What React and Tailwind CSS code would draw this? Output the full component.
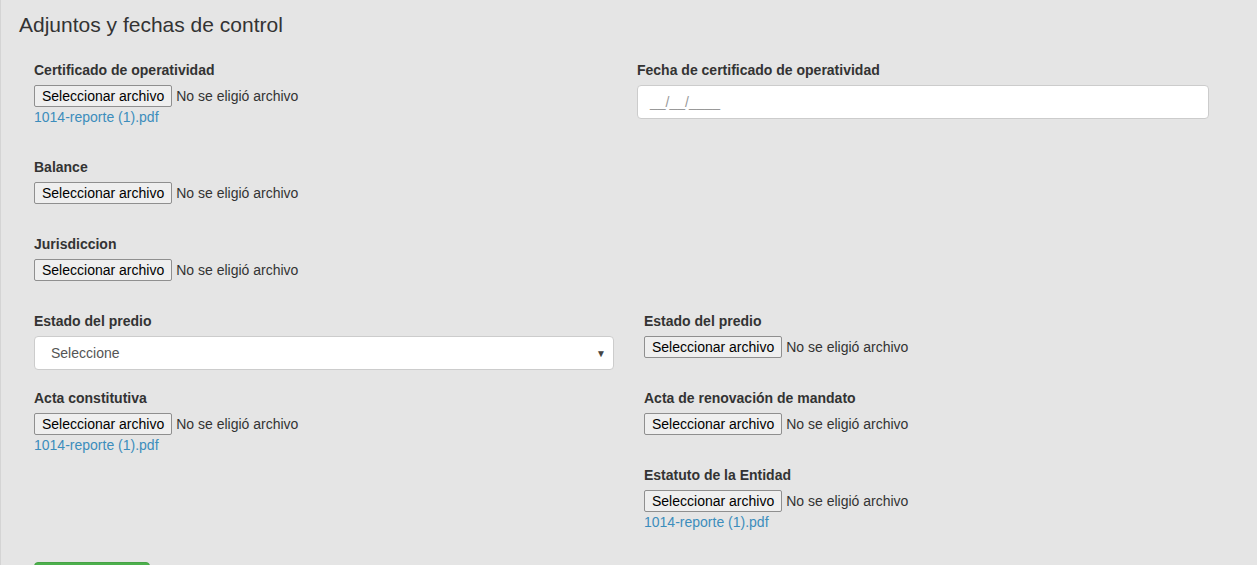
import React from 'react';

const FileBox = () => (
  <div className="flex items-center h-[22px]">
    <span className="h-[22px] px-[7px] border border-[#8f8f8f] rounded-[2px] bg-[#efefef] text-[14px] leading-[20px] text-black">
      Seleccionar archivo
    </span>
    <span className="ml-[4px] text-[14px] text-[#333]">No se eligió archivo</span>
  </div>
);

const Label = ({ children }) => (
  <div className="h-[20px] leading-[20px] mb-[5px] text-[14px] font-bold text-[#333]">{children}</div>
);

const FileLink = () => (
  <a href="#" className="block h-[20px] leading-[20px] text-[14px] text-[#3c8dbc]">
    1014-reporte (1).pdf
  </a>
);

const FileField = ({ label, link }) => (
  <div>
    <Label>{label}</Label>
    <FileBox />
    {link && <FileLink />}
  </div>
);

const App = () => {
  return (
    <div className="min-h-screen bg-[#e5e5e5] border-l border-[#d4d4d4] font-['Liberation_Sans',Arial,sans-serif] overflow-hidden">
      <h3 className="pl-[18px] pt-[13px] text-[21px] leading-[23px] text-[#333]">Adjuntos y fechas de control</h3>

      <div className="pl-[33px] pt-[24px]">
        {/* fila 1 */}
        <div className="flex h-[97px]">
          <div className="w-[603px]">
            <FileField label="Certificado de operatividad" link />
          </div>
          <div className="w-[572px]">
            <Label>Fecha de certificado de operatividad</Label>
            <div className="h-[34px] bg-white border border-[#ccc] rounded-[4px] px-[12px] flex items-center text-[14px] text-[#999]">
              __/__/____
            </div>
          </div>
        </div>

        <div className="h-[77px]">
          <FileField label="Balance" />
        </div>

        <div className="h-[77px]">
          <FileField label="Jurisdiccion" />
        </div>

        {/* Estado del predio */}
        <div className="flex h-[77px]">
          <div className="w-[610px]">
            <Label>Estado del predio</Label>
            <div className="w-[580px] h-[34px] bg-white border border-[#ccc] rounded-[4px] pl-[16px] pr-[7px] flex items-center justify-between text-[14px] text-[#555]">
              <span>Seleccione</span>
              <span className="text-[10px] text-[#444]">▼</span>
            </div>
          </div>
          <div>
            <FileField label="Estado del predio" />
          </div>
        </div>

        <div className="flex h-[77px]">
          <div className="w-[610px]">
            <FileField label="Acta constitutiva" link />
          </div>
          <div>
            <FileField label="Acta de renovación de mandato" />
          </div>
        </div>

        <div className="flex h-[97px]">
          <div className="w-[610px]"></div>
          <div>
            <FileField label="Estatuto de la Entidad" link />
          </div>
        </div>

        <button className="w-[116px] h-[34px] bg-[#4cb04c] border border-[#46a246] rounded-[4px] text-white text-[14px]">
          Guardar
        </button>
      </div>
    </div>
  );
};

export default App;
